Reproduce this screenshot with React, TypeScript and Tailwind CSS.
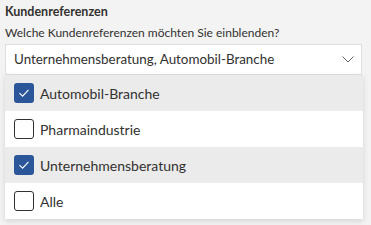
import { useState } from 'react';

const options = [
  { label: 'Automobil-Branche', checked: true },
  { label: 'Pharmaindustrie', checked: false },
  { label: 'Unternehmensberatung', checked: true },
  { label: 'Alle', checked: false },
];

function Checkbox({ checked }: { checked: boolean }) {
  if (checked) {
    return (
      <span className="flex h-[20px] w-[20px] shrink-0 items-center justify-center rounded-[3px] bg-[#2b579a]">
        <svg width="12" height="10" viewBox="0 0 12 10" fill="none">
          <path d="M1.5 5.2 L4.6 8.2 L10.5 1.8" stroke="#fff" strokeWidth="1.1" />
        </svg>
      </span>
    );
  }
  return <span className="h-[20px] w-[20px] shrink-0 rounded-[3px] border border-[#323130] bg-white" />;
}

export default function App() {
  const [items] = useState(options);

  return (
    <div
      className="h-[225px] w-[371px] bg-[#f3f3f3] pl-[5px] text-[#323130]"
      style={{ fontFamily: 'Lato, "Open Sans", sans-serif' }}
    >
      <div className="pt-[3px] text-[12.5px] font-bold leading-[18px]">Kundenreferenzen</div>
      <div className="mt-[3px] text-[12px] leading-[18px]">Welche Kundenreferenzen möchten Sie einblenden?</div>

      <div className="mt-[2px] flex h-[31px] w-[357px] items-center justify-between border border-[#e1dfdd] bg-white pl-[8px] pr-[7px]">
        <span className="text-[13.4px]">Unternehmensberatung, Automobil-Branche</span>
        <svg width="12" height="7" viewBox="0 0 12 7" fill="none">
          <path d="M0.5 0.5 L6 6 L11.5 0.5" stroke="#605e5c" strokeWidth="1" />
        </svg>
      </div>

      <div className="w-[358px] bg-white shadow-[0_2px_6px_rgba(0,0,0,0.13)]">
        {items.map((item) => (
          <div
            key={item.label}
            className={`flex h-[36px] items-center pl-[9px] ${item.checked ? 'bg-[#ebebeb]' : 'bg-white'}`}
          >
            <Checkbox checked={item.checked} />
            <span className="ml-[6px] text-[14px]">{item.label}</span>
          </div>
        ))}
      </div>
    </div>
  );
}
